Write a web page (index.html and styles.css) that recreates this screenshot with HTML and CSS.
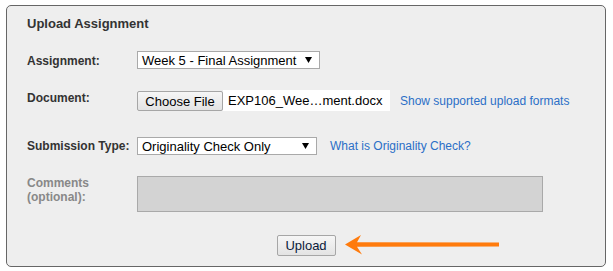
FILE: index.html
```html
<!DOCTYPE html>
<html>
<head>
<meta charset="utf-8">
<link rel="stylesheet" href="styles.css">
</head>
<body>
<form class="panel">
  <h2 class="title">Upload Assignment</h2>

  <div class="row row-assign">
    <label class="label label-assign">Assignment:</label>
    <div class="select select-assign">
      <span>Week 5 - Final Assignment</span>
      <svg class="caret" width="7" height="6" viewBox="0 0 7 6"><path d="M0 0H7L3.5 6Z" fill="#000"/></svg>
    </div>
  </div>

  <div class="row row-doc">
    <label class="label label-doc">Document:</label>
    <div class="file">
      <button type="button" class="btn btn-choose">Choose File</button>
      <span class="filename">EXP106_Wee…ment.docx</span>
    </div>
    <a class="link link-formats" href="#">Show supported upload formats</a>
  </div>

  <div class="row row-type">
    <label class="label label-type">Submission Type:</label>
    <div class="select select-type">
      <span>Originality Check Only</span>
      <svg class="caret" width="7" height="6" viewBox="0 0 7 6"><path d="M0 0H7L3.5 6Z" fill="#000"/></svg>
    </div>
    <a class="link link-what" href="#">What is Originality Check?</a>
  </div>

  <div class="row row-comments">
    <label class="label label-comments">Comments<br>(optional):</label>
    <textarea class="comments" disabled></textarea>
  </div>

  <div class="row row-upload">
    <button type="button" class="btn btn-upload">Upload</button>
    <svg class="arrow" width="160" height="22" viewBox="0 0 160 22">
      <path d="M1 10.5 L17 1 L13 8.3 L155 8.5 L155 12.5 L13 12.7 L18 20.5 Z" fill="#ff7b0d"/>
    </svg>
  </div>
</form>
</body>
</html>
```
FILE: styles.css
```css
html, body {
  margin: 0;
  padding: 0;
  background: #ffffff;
}
body {
  padding: 5px 0 0 6px;
  font-family: "Liberation Sans", Arial, sans-serif;
  color: #333333;
}
.panel {
  box-sizing: border-box;
  width: 600px;
  margin: 0;
  padding: 10px 20px 10px 20px;
  background: #eeeeee;
  border: 1px solid #666666;
  border-radius: 5px;
}
.title {
  margin: 0;
  font-size: 13px;
  line-height: 15px;
  font-weight: bold;
  color: #333333;
}
.row {
  display: flex;
  align-items: flex-start;
}
.label {
  flex: 0 0 110px;
  width: 110px;
  font-size: 12px;
  line-height: 14px;
  font-weight: bold;
  color: #333333;
}
.row-assign { margin-top: 20px; }
.label-assign { margin-top: 3px; }
.row-doc { margin-top: 21px; align-items: center; }
.label-doc { align-self: flex-start; margin-top: 1px; }
.row-type { margin-top: 26px; align-items: center; }
.label-type { align-self: flex-start; margin-top: 2px; }
.row-comments { margin-top: 21px; }
.label-comments { color: #888888; }
.row-upload {
  margin-top: 23px;
  justify-content: center;
  position: relative;
}

.select {
  box-sizing: border-box;
  height: 18px;
  display: flex;
  align-items: center;
  justify-content: space-between;
  padding: 0 7px 0 4px;
  background: #ffffff;
  border: 1px solid #a9a9a9;
  font-size: 13px;
  line-height: 15px;
  color: #000000;
}
.select-assign { width: 183px; }
.select-type { width: 180px; }
.caret { display: block; }

.file {
  display: flex;
  align-items: center;
  height: 21px;
}
.btn {
  box-sizing: border-box;
  margin: 0;
  padding: 0;
  font-family: "Liberation Sans", Arial, sans-serif;
  font-size: 13px;
  line-height: 15px;
  color: #000000;
  background: linear-gradient(#f6f6f6, #e3e3e3);
  border: 1px solid #a6a6a6;
  border-radius: 2px;
  text-align: center;
}
.btn-choose {
  width: 86px;
  height: 20px;
  margin-top: 1px;
  align-self: flex-start;
}
.filename {
  box-sizing: border-box;
  width: 167px;
  height: 21px;
  padding-left: 5px;
  display: flex;
  align-items: center;
  background: #ffffff;
  font-size: 13px;
  line-height: 15px;
  color: #000000;
  white-space: nowrap;
}
.link {
  font-size: 12px;
  line-height: 14px;
  color: #2b6fc7;
  text-decoration: none;
}
.link-formats { margin-left: 10px; }
.link-what { margin-left: 13px; }

.comments {
  box-sizing: border-box;
  width: 406px;
  height: 36px;
  margin: 0;
  padding: 0;
  resize: none;
  background: #d3d3d3;
  border: 1px solid #a9a9a9;
  border-radius: 0;
}
.btn-upload {
  width: 59px;
  height: 21px;
  color: #0a1a3a;
}
.arrow {
  position: absolute;
  left: 317px;
  top: -1px;
}
```
